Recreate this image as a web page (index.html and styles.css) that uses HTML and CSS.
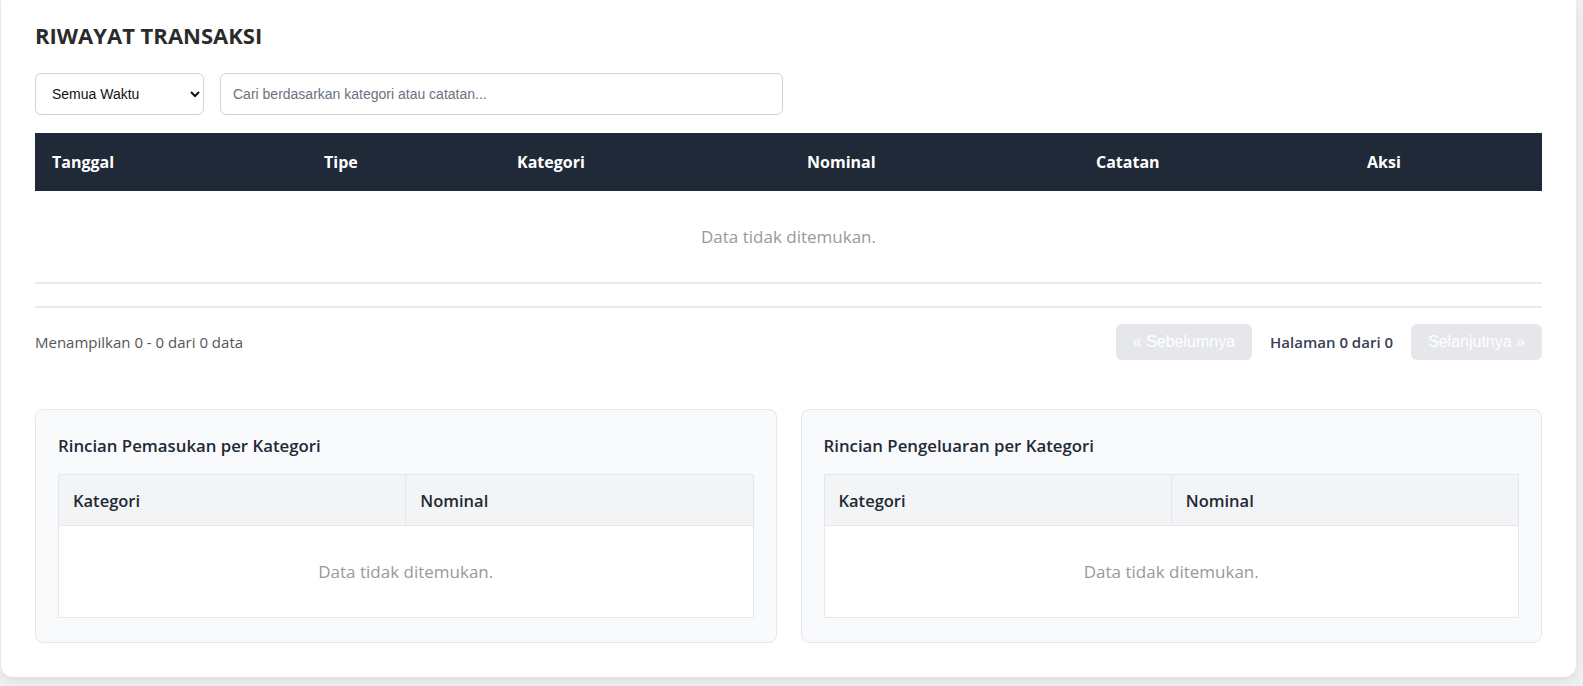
FILE: index.html
```html
<!DOCTYPE html>
<html lang="id">
<head>
    <meta charset="UTF-8">
    <meta name="viewport" content="width=device-width, initial-scale=1.0">
    <title>Riwayat Transaksi</title>
    <link rel="stylesheet" href="styles.css">
</head>
<body>

<div class="page">
  <div class="card">
    <h2 class="card-title">RIWAYAT TRANSAKSI</h2>

    <div class="filters">
      <select class="filter-select">
        <option>Semua Waktu</option>
        <option>Hari Ini</option>
        <option>Minggu Ini</option>
        <option>Bulan Ini</option>
      </select>
      <input class="filter-search" type="text" placeholder="Cari berdasarkan kategori atau catatan...">
    </div>

    <div class="table-wrap">
      <table class="history-table">
        <thead>
          <tr>
            <th class="col-date">Tanggal</th>
            <th class="col-type">Tipe</th>
            <th class="col-cat">Kategori</th>
            <th class="col-amount">Nominal</th>
            <th class="col-note">Catatan</th>
            <th>Aksi</th>
          </tr>
        </thead>
        <tbody>
          <tr>
            <td colspan="6" class="empty">Data tidak ditemukan.</td>
          </tr>
        </tbody>
      </table>
    </div>

    <div class="pagination">
      <span class="page-info">Menampilkan 0 - 0 dari 0 data</span>
      <div class="page-controls">
        <button class="page-btn" disabled>&laquo; Sebelumnya</button>
        <span class="page-num">Halaman 0 dari 0</span>
        <button class="page-btn" disabled>Selanjutnya &raquo;</button>
      </div>
    </div>

    <div class="summary">
      <div class="summary-box">
        <h3 class="summary-title">Rincian Pemasukan per Kategori</h3>
        <table class="summary-table">
          <thead>
            <tr><th>Kategori</th><th>Nominal</th></tr>
          </thead>
          <tbody>
            <tr><td colspan="2" class="empty">Data tidak ditemukan.</td></tr>
          </tbody>
        </table>
      </div>
      <div class="summary-box">
        <h3 class="summary-title">Rincian Pengeluaran per Kategori</h3>
        <table class="summary-table">
          <thead>
            <tr><th>Kategori</th><th>Nominal</th></tr>
          </thead>
          <tbody>
            <tr><td colspan="2" class="empty">Data tidak ditemukan.</td></tr>
          </tbody>
        </table>
      </div>
    </div>
  </div>
</div>

</body>
</html>
```

FILE: styles.css
```css
html, body {
    margin: 0;
    padding: 0;
}

body {
    font-family: "Open Sans", "Noto Sans", sans-serif;
    background-color: #eeeff1;
    color: #1f2937;
}

.page {
    padding: 0 7px 9px 1px;
}

.card {
    background-color: #ffffff;
    border-radius: 0 0 12px 12px;
    box-shadow: 0 4px 10px rgba(0, 0, 0, 0.07);
    padding: 19px 34px 34px 34px;
}

.card-title {
    margin: 0 0 22px 0;
    font-size: 22px;
    line-height: 32px;
    font-weight: 700;
    color: #2b2b2b;
}

.filters {
    display: flex;
    gap: 16px;
    margin-bottom: 18px;
}

.filter-select {
    width: 169px;
    height: 42px;
    padding: 0 10px 0 12px;
    font-family: "Liberation Sans", Arial, sans-serif;
    font-size: 14px;
    color: #111;
    background-color: #fff;
    border: 1px solid #cfd4da;
    border-radius: 6px;
}

.filter-search {
    width: 563px;
    height: 42px;
    box-sizing: border-box;
    padding: 0 12px;
    font-family: "Liberation Sans", Arial, sans-serif;
    font-size: 14px;
    border: 1px solid #cfd4da;
    border-radius: 6px;
}

.filter-search::placeholder {
    color: #6b7280;
}

.table-wrap {
    border-bottom: 2px solid #e9eaec;
}

.history-table {
    width: 100%;
    border-collapse: collapse;
}

.history-table th {
    background-color: #1f2937;
    color: #ffffff;
    text-align: left;
    font-size: 16px;
    font-weight: 700;
    height: 58px;
    padding: 0 17px;
}

.col-date { width: 238px; }
.col-type { width: 159px; }
.col-cat { width: 256px; }
.col-amount { width: 255px; }
.col-note { width: 237px; }

.empty {
    text-align: center;
    color: #999;
    font-size: 17px;
}

.history-table .empty {
    height: 91px;
    padding: 0;
}

.pagination {
    display: flex;
    justify-content: space-between;
    align-items: center;
    margin-top: 22px;
    border-top: 2px solid #e9eaec;
    padding-top: 16px;
}

.page-info {
    font-size: 15px;
    color: #555;
}

.page-controls {
    display: flex;
    align-items: center;
    gap: 18px;
}

.page-num {
    font-size: 15px;
    font-weight: 600;
    color: #374151;
}

.page-btn {
    height: 36px;
    padding: 0 17px;
    font-family: "Liberation Sans", Arial, sans-serif;
    font-size: 16px;
    color: #ffffff;
    background-color: #e5e7eb;
    border: none;
    border-radius: 6px;
}

.summary {
    display: grid;
    grid-template-columns: 1fr 1fr;
    gap: 24px;
    margin-top: 49px;
}

.summary-box {
    background-color: #f9fafb;
    border: 1px solid #e5e7eb;
    border-radius: 8px;
    padding: 24px 22px;
}

.summary-title {
    margin: 0 0 16px 0;
    font-size: 16.8px;
    line-height: 24px;
    font-weight: 600;
    color: #1f2937;
}

.summary-table {
    width: 100%;
    border-collapse: collapse;
    background-color: #ffffff;
}

.summary-table th {
    width: 50%;
    background-color: #f3f4f6;
    border: 1px solid #e5e7eb;
    text-align: left;
    font-size: 16.5px;
    font-weight: 600;
    height: 50px;
    padding: 0 14px;
}

.summary-table .empty {
    height: 91px;
    padding: 0;
    border: 1px solid #e5e7eb;
}
```
